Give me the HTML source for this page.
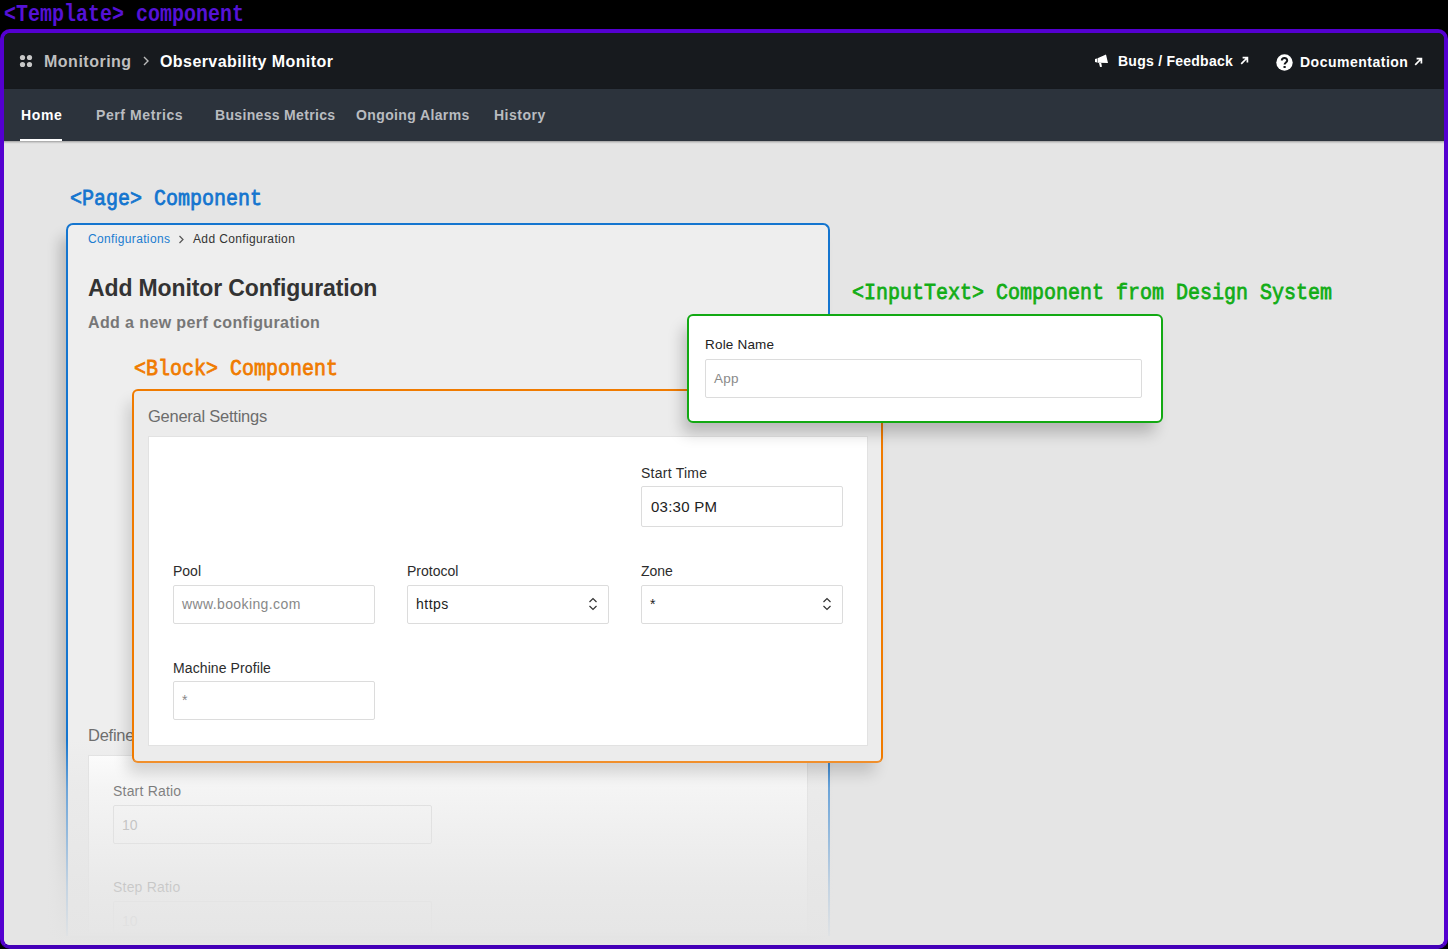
<!DOCTYPE html>
<html><head><meta charset="utf-8">
<style>
*{box-sizing:border-box;margin:0;padding:0}
html,body{width:1448px;height:949px;overflow:hidden;background:#000;font-family:"Liberation Sans",sans-serif}
.abs{position:absolute}
.mono{font-family:"Liberation Mono",monospace;font-weight:bold;font-size:20px;white-space:nowrap;line-height:20px}
#tlabel{left:4px;top:3.8px;color:#5512d6;transform:scaleY(1.15);transform-origin:0 0}
#frame{left:0;top:29px;width:1448px;height:920px;border:4px solid #5400d0;border-bottom-color:#4400b8;border-radius:10px;background:linear-gradient(#171a1e 0,#171a1e 100px,#e5e5e5 100px);overflow:hidden}
#in{left:-4px;top:-33px;width:1448px;height:949px}
#hdr{left:0;top:33px;width:1448px;height:56px;background:#171a1e}
#nav{left:0;top:89px;width:1448px;height:52px;background:#2c333c;box-shadow:0 1px 2px rgba(0,0,0,.35)}
.t{position:absolute;white-space:nowrap;line-height:1}
.hb{font-weight:bold;color:#fff}

#page{left:66px;top:223px;width:764px;height:713px;border:2px solid #1475cf;border-bottom:0;border-radius:7px 7px 0 0;background:#eeeeee;box-shadow:-8px 12px 14px -2px rgba(0,0,0,.2)}
#panel2{left:88px;top:755px;width:720px;height:178px;background:#fff;border:1px solid #e2e2e2;border-bottom:0}
#fade{left:4px;top:740px;width:1440px;height:205px;background:linear-gradient(to bottom,rgba(229,229,229,0) 0%,rgba(229,229,229,.22) 12%,rgba(229,229,229,.42) 24%,rgba(229,229,229,.84) 71%,rgba(229,229,229,1) 100%)}
#block{left:132px;top:389px;width:751px;height:374px;border:2px solid #f07b00;border-bottom-color:#f08f2c;border-radius:6px;background:#ececec;box-shadow:-6px 12px 15px -2px rgba(0,0,0,.16)}
#panel{left:148px;top:436px;width:720px;height:310px;background:#fff;border:1px solid #e2e2e2}
#green{left:687px;top:314px;width:476px;height:109px;border:2px solid #12a913;border-radius:6px;background:#fff;box-shadow:-6px 12px 15px -2px rgba(0,0,0,.22)}
.inp{border:1px solid #dcdcdc;border-radius:2px;background:#fff}
.lbl{font-size:14px;color:#2c2c2c}
.lab{font-weight:normal;-webkit-text-stroke:0.7px currentColor}
</style></head><body>
<div id="tlabel" class="abs mono">&lt;Template&gt; component</div>
<div id="frame" class="abs"><div id="in" class="abs">
  <div id="hdr" class="abs"></div>
  <div id="nav" class="abs"></div>
  <!-- header content -->
  <svg class="abs" style="left:19px;top:54px" width="14" height="14" viewBox="0 0 14 14"><g fill="#c8c8c8"><circle cx="3.5" cy="3.5" r="2.6"/><circle cx="10.5" cy="3.5" r="2.6"/><circle cx="3.5" cy="10.5" r="2.6"/><circle cx="10.5" cy="10.5" r="2.6"/></g></svg>
  <div class="t hb" style="left:44px;top:54px;font-size:16px;color:#bfbfbf;letter-spacing:0.5px">Monitoring</div>
  <svg class="abs" style="left:142px;top:55px" width="8" height="12" viewBox="0 0 8 12"><path d="M2 2 L6 6 L2 10" fill="none" stroke="#bbb" stroke-width="1.4"/></svg>
  <div class="t hb" style="left:160px;top:54px;font-size:16px;letter-spacing:0.42px">Observability Monitor</div>

  <svg class="abs" style="left:1094px;top:53px" width="15" height="15" viewBox="0 0 15 15"><path d="M1 6 L3 5.5 L3 9.5 L1 9 Z M3.5 5.3 L12 1.5 L14 10 L3.5 9.7 Z M5 10 L7.2 10 L8 13.8 L6 14 Z" fill="#fff"/></svg>
  <div class="t hb" style="left:1118px;top:54px;font-size:14px;letter-spacing:0.25px">Bugs / Feedback</div>
  <svg class="abs" style="left:1240px;top:56px" width="9" height="9" viewBox="0 0 9 9"><path d="M1.2 7.8 L7 2 M2.6 1.6 L7.4 1.6 L7.4 6.4" fill="none" stroke="#fff" stroke-width="1.7"/></svg>
  <svg class="abs" style="left:1276px;top:54px" width="17" height="17" viewBox="0 0 17 17"><circle cx="8.5" cy="8.5" r="8.2" fill="#fff"/><path d="M5.8 6.5 C5.8 3.2 11.2 3.2 11.2 6.4 C11.2 8.4 8.6 8.6 8.6 10.6" fill="none" stroke="#171a1e" stroke-width="2"/><rect x="7.5" y="12" width="2.2" height="2" fill="#171a1e"/></svg>
  <div class="t hb" style="left:1300px;top:55px;font-size:14px;letter-spacing:0.5px">Documentation</div>
  <svg class="abs" style="left:1414px;top:57px" width="9" height="9" viewBox="0 0 9 9"><path d="M1.2 7.8 L7 2 M2.6 1.6 L7.4 1.6 L7.4 6.4" fill="none" stroke="#fff" stroke-width="1.7"/></svg>

  <!-- nav -->
  <div class="t hb" style="left:21px;top:108px;font-size:14px;letter-spacing:0.67px">Home</div>
  <div class="abs" style="left:20px;top:138.5px;width:42px;height:2.5px;background:#fff"></div>
  <div class="t hb" style="left:96px;top:108px;font-size:14px;color:#b9bcc0;letter-spacing:0.59px">Perf Metrics</div>
  <div class="t hb" style="left:215px;top:108px;font-size:14px;color:#b9bcc0;letter-spacing:0.33px">Business Metrics</div>
  <div class="t hb" style="left:356px;top:108px;font-size:14px;color:#b9bcc0;letter-spacing:0.38px">Ongoing Alarms</div>
  <div class="t hb" style="left:494px;top:108px;font-size:14px;color:#b9bcc0;letter-spacing:0.5px">History</div>

  <!-- PAGE component -->
  <div class="t mono lab" style="left:70px;top:187.5px;color:#1475cf;transform:scaleY(1.14);transform-origin:0 0">&lt;Page&gt; Component</div>
  <div id="page" class="abs"></div>
  <div class="t" style="left:88px;top:233px;font-size:12px;color:#1a7cd0;letter-spacing:0.35px">Configurations</div>
  <svg class="abs" style="left:177px;top:235px" width="8" height="9" viewBox="0 0 8 9"><path d="M2.5 1 L6 4.5 L2.5 8" fill="none" stroke="#555" stroke-width="1.2"/></svg>
  <div class="t" style="left:193px;top:233px;font-size:12px;color:#333;letter-spacing:0.36px">Add Configuration</div>
  <div class="t" style="left:88px;top:276.5px;font-size:23px;font-weight:bold;color:#333;letter-spacing:-0.13px">Add Monitor Configuration</div>
  <div class="t" style="left:88px;top:314.5px;font-size:16px;font-weight:bold;color:#777;letter-spacing:0.39px">Add a new perf configuration</div>
  <div class="t" style="left:88px;top:726.5px;font-size:16.5px;color:#6e6e6e;letter-spacing:-0.25px">Define</div>
  <div id="panel2" class="abs"></div>
  <div class="t lbl" style="left:113px;top:784px;color:#333;letter-spacing:0.2px">Start Ratio</div>
  <div class="abs inp" style="left:113px;top:805px;width:319px;height:39px"></div>
  <div class="t" style="left:122px;top:818px;font-size:14px;color:#999">10</div>
  <div class="t lbl" style="left:113px;top:880px;color:#333;letter-spacing:0.2px">Step Ratio</div>
  <div class="abs inp" style="left:113px;top:901px;width:319px;height:32px;border-bottom:0"></div>
  <div class="t" style="left:122px;top:914px;font-size:14px;color:#999">10</div>
  <div id="fade" class="abs"></div>

  <!-- BLOCK component -->
  <div class="t mono lab" style="left:134px;top:357.5px;color:#f07b00;transform:scaleY(1.14);transform-origin:0 0">&lt;Block&gt; Component</div>
  <div id="block" class="abs"></div>
  <div class="t" style="left:148px;top:407.5px;font-size:16.5px;color:#6c6c6c;letter-spacing:-0.25px">General Settings</div>
  <div id="panel" class="abs"></div>
  <div class="t lbl" style="left:641px;top:466px;letter-spacing:0.24px">Start Time</div>
  <div class="abs inp" style="left:641px;top:486px;width:202px;height:41px"></div>
  <div class="t" style="left:651px;top:499px;font-size:15px;color:#222;letter-spacing:0.25px">03:30 PM</div>
  <div class="t lbl" style="left:173px;top:564px">Pool</div>
  <div class="abs inp" style="left:173px;top:585px;width:202px;height:39px"></div>
  <div class="t" style="left:182px;top:597px;font-size:14px;color:#888;letter-spacing:0.39px">www.booking.com</div>
  <div class="t lbl" style="left:407px;top:564px">Protocol</div>
  <div class="abs inp" style="left:407px;top:585px;width:202px;height:39px"></div>
  <div class="t" style="left:416px;top:597px;font-size:14px;color:#222;letter-spacing:0.5px">https</div>
  <svg class="abs" style="left:588px;top:597px" width="10" height="14" viewBox="0 0 10 14"><path d="M1.5 5 L5 1.5 L8.5 5 M1.5 9 L5 12.5 L8.5 9" fill="none" stroke="#333" stroke-width="1.2"/></svg>
  <div class="t lbl" style="left:641px;top:564px">Zone</div>
  <div class="abs inp" style="left:641px;top:585px;width:202px;height:39px"></div>
  <div class="t" style="left:650px;top:597px;font-size:14px;color:#222">*</div>
  <svg class="abs" style="left:822px;top:597px" width="10" height="14" viewBox="0 0 10 14"><path d="M1.5 5 L5 1.5 L8.5 5 M1.5 9 L5 12.5 L8.5 9" fill="none" stroke="#333" stroke-width="1.2"/></svg>
  <div class="t lbl" style="left:173px;top:660.5px;letter-spacing:0.1px">Machine Profile</div>
  <div class="abs inp" style="left:173px;top:681px;width:202px;height:39px"></div>
  <div class="t" style="left:182px;top:693px;font-size:14px;color:#888">*</div>

  <!-- INPUTTEXT component -->
  <div class="t mono lab" style="left:852px;top:281.8px;color:#12ad16;transform:scaleY(1.14);transform-origin:0 0">&lt;InputText&gt; Component from Design System</div>
  <div id="green" class="abs"></div>
  <div class="t" style="left:705px;top:338px;font-size:13.5px;color:#222;letter-spacing:0.19px">Role Name</div>
  <div class="abs inp" style="left:705px;top:359px;width:437px;height:39px"></div>
  <div class="t" style="left:714px;top:372px;font-size:13.5px;color:#8a8a8a;letter-spacing:0.3px">App</div>
</div></div>
</body></html>
